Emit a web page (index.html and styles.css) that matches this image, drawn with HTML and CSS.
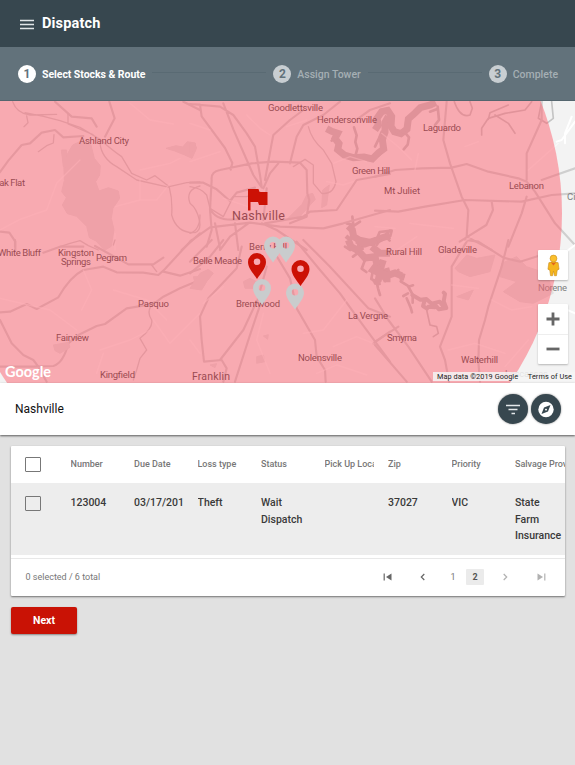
FILE: index.html
```html
<!DOCTYPE html>
<html lang="en">
<head>
<meta charset="utf-8">
<title>Dispatch</title>
<link rel="stylesheet" href="styles.css">
</head>
<body>
<header class="topbar">
  <svg class="menu" viewBox="0 0 14 11"><path d="M0 1.500h14M0 5.500h14M0 9.500h14"/></svg>
  <h1>Dispatch</h1>
</header>
<nav class="stepper">
  <div class="step active"><span class="num">1</span><span>Select Stocks &amp; Route</span></div>
  <i class="line"></i>
  <div class="step"><span class="num">2</span><span>Assign Tower</span></div>
  <i class="line"></i>
  <div class="step"><span class="num">3</span><span>Complete</span></div>
</nav>
<section class="map">
  <svg class="map-art" viewBox="0 101 575 282">
    <defs>
      <path id="pin" fill-rule="evenodd" d="M0 0C-4-6-9-11-9-17A9 9 0 0 1 9-17C9-11 4-6 0 0ZM0-20.5A3.3 3.3 0 1 0 0-13.9A3.3 3.3 0 1 0 0-20.5Z"/>
    </defs>
    <rect y="101" width="575" height="282" fill="#f3f3f3"/>
    <g transform="translate(0 100) scale(.33333)">
      <path class="land" d="M218 135l25-12 30 12 10 40 18 22-2 28-12 20 10 28 28-10 30 10 4 22-20 30-5 30 8 34-8 50-20 12-26-28-20-10-8-34-30-30-28-8-15-26 12-22-14-18 8-34-2-60zM184 150l16 0-2 50-8 0zM498 145l30-8 20 4 14-16 24 4 2 20-12 26-22-10-30-12z"/>
      <path class="road" d="M0 216L25 182 65 135 90 130 125 98 165 90 190 112 250 108M328 5L344 55 315 110M165 5l50 45 60 5 15 25M0 395l28 3 18 27 0 25M545 450L600 400M550 5l50 25"/>
      <path class="river" d="M38 5Q50 40 90 45L170 43M75 38Q130 48 180 62L240 82 300 118Q335 150 365 170L395 220 440 240 465 227 508 260 560 248 600 246M300 130Q305 175 350 200L410 240 508 262Q518 300 515 345 530 400 585 398 605 390 598 360 590 325 570 310 555 270 600 258M80 48l4 20-12 12M204 42l0 30 75 32M115 155l25-18 20-8 2-25M180 440l30-10 30-8 25 15 30 13"/>
      <path class="minor" d="M0 390L60 358 140 330 170 250 240 180M345 320L420 300 420 240M345 400l0 50M420 300l50 0 40-50M390 10l60 50 70 12M420 210l90-20 30-15"/>
    </g>
    <g transform="translate(190 100) scale(.33333)">
      <path class="land" d="M0 130l14 0 6 15-20 15zM350 285l18-5 8 18-45 50-40 10 45-45zM398 270l20-15-8 60-15 8z"/>
      <path class="lake wide" d="M410 86l15 8 18 6-8 15 12 16-4 18 20 16 27 8 32-2 25 6 20-20 14-10-4-28 8-22 0-30 10-18"/>
      <path class="lake" d="M492 82l8 24-4 20 6 20-6 22M545 178l25-15M425 122l15-8"/>
      <path class="lake wide" d="M475 378l12 12 4 20 20 12 0 28M505 420l40 8 30-14 25-8M480 410l-8 10"/>
      <path class="lake" d="M487 350l3 25-20-5M510 365l-18 12M590 400l10-8"/>
      <path class="road" d="M0 12l30 2 5 35 70 95 22 45-5 20M100 10L130 88 190 225 215 262M0 12L90 20 130 45 170 100 195 140 210 225 215 260M0 248l40 0 40 20 40 35 20-25 55-15M60 330L65 240Q62 215 90 210L185 190 250 185 330 188 350 210 352 280 358 300 350 350 300 370M225 240L245 130 250 105 300 60 340 30M300 190L320 110 340 75 400 45 450 5M220 265L240 220 265 190M600 10L540 30 505 55M225 370L340 350 360 335 440 330 500 240 600 222M0 425l60-43 120-14 90 12 130 5 60-15L600 330M60 330l5 60-15 50M75 370l15 75M135 370L145 450M175 370L120 410 90 450M215 370l45 20 90 60M230 265L220 360M60 325Q80 370 160 355"/>
      <path class="river" d="M0 260Q35 265 50 285L60 325 100 350 130 290 170 290 210 275M355 80Q365 120 400 150L425 190 438 245Q430 285 395 280L370 250 370 195 345 178 310 200M30 345Q30 390 0 400"/>
      <path class="minor" d="M170 45l40 40 30 20M430 190l50-20 50 15M0 70l60 20M0 185l90-30M100 295l90 30M290 80l60-20M410 245l50 10 30-10"/>
    </g>
    <g transform="translate(375 100) scale(.33333)">
      <path class="lake wide" d="M0 90l10-15-4-20 14-20 18-4 12 18-2 30 10 16 20 6 18-14 4-30 20-18 16-16 30-8 16-8"/>
      <path class="lake" d="M90 98l12 14-4 22-12 14M0 140l12-25 8-20M165 35l22-8M188 20l4 40-12 15M60 92l20 10"/>
      <path class="lake" d="M5 435l15-22 26-5 4-16-36 4-6 14M32 410l12 12"/>
      <path class="wriver" d="M238 5Q255 55 285 45L292 25 285 5M400 15l-55 23-5 20M470 5l-20 25-60 10-50 15-20 30 0 20M360 45l40 25 20 30M530 5l5 50-20 15-25-15 10-50"/>
      <path class="road" d="M215 5L205 120 225 190 260 290 280 330 275 410 350 450M0 230L60 210 140 205 230 203 275 192 340 215 430 235 455 245M0 332L70 335 150 320 270 300 440 305 530 285 600 280M500 5L500 60 455 160 455 240M500 240L600 205M455 290L440 340 400 440M480 275L540 370 600 435M350 305l4 25-20 45-80 50M455 245l25 30"/>
      <path class="minor" d="M20 100l50 40 40 40M105 370l40 5 90 10M0 380l60 5M130 160l-10 50M460 210l90-80M270 140l40-15M65 450l60-40"/>
      <path class="outer" d="M600 65L560 120 545 125M570 130l0-30 20-50"/>
    </g>
    <g transform="translate(0 240) scale(.33333)">
      <path class="road" d="M45 20l0-20M0 217l30-2 50-23 30 15 65-35Q210 110 250 90L310 80 350 97 430 98 475 105 490 92 575 0M0 240L35 310 70 345 100 360 115 380 140 425M0 380L100 380 160 378Q190 370 205 310L235 285 290 258 315 252 380 205 430 197 470 185 490 170 540 145 600 120M490 95l50 12 60-20M130 38l50-18 70 0M285 18l100 55 75 0 30-20M385 73l75 0"/>
      <path class="river" d="M465 185Q435 210 455 240 460 265 420 295L440 330 420 355 410 390 400 420M455 75l15 20M340 15l5-15"/>
      <path class="land" d="M160 315l45-8 5 15-30 18-15-8zM580 110l20 0 0 40-12-10z"/>
      <path class="minor" d="M0 175l150 35 80 60M250 90l25 60-30 60M340 150l100 30 60 60M300 330l90-30 60-30M600 220l-90 90-50-70M290 400l20-60"/>
    </g>
    <g transform="translate(190 240) scale(.33333)">
      <path class="land" d="M30 100l25-12 15 12-20 25-15 25-35-5zM160 125l20-10 20 10-5 20-30 0zM200 350l20-5 5 20-25 5zM220 288l15-4-2 14zM60 375l20-4-5 12z"/>
      <path class="lake wide" d="M475 0l8 20 22 12 20 22 30-4 6 24-12 16 20 10 31-8M500 0l25 12 35-12M545 20l25 20 30 0M580 60l-10 30"/>
      <path class="lake" d="M465 20l15 10M505 38l-16 12M525 60l-10 26 14 10M548 95l-4 22 16 8 4 20 6 20M570 105l16 18M555 130l14 2"/>
      <path class="road" d="M65 0L0 65M100 0L60 50 0 100M155 20L140 85 55 175 30 230 35 300 42 365 95 360 110 385 100 425M90 360L160 270 195 195M212 190L195 240 180 285 135 425M255 40L300 115 320 205 375 300 380 350 405 390 407 425M320 5L390 90 450 160 500 230 600 365M340 0L420 80 535 205 600 230M550 310l50-35M230 80l-30 110"/>
      <path class="minor" d="M100 140l-60 50M470 180l-70 90-60 10M430 320l70-30 50 20M380 400l60-25 90 30M220 220l-20 80 40 100M0 300l30 40"/>
    </g>
    <g transform="translate(375 240) scale(.33333)">
      <path class="land" d="M240 85l35-40 30 10 55-10-15 50-60 15-35-15zM245 170l50-20-15 30zM380 70l45-20 30 30 60 20 20 60-60 30-40-5-50-30 40-30-50-15z"/>
      <path class="lake wide" d="M0 85l15 10-5 25-10 12M12 95l24 12 24-8 20 8M36 107l0 20M75 108l14 4"/>
      <path class="lake" d="M10 62l14 20M60 100l10-10M85 110l-8 14 22 14 14 26 0 24M100 140l14-4M95 175l12 28 4 14M99 160l-14 8"/>
      <path class="lake mid" d="M112 165l24 14 18-2 16 14 24-6 12 16M150 178l-6 20 12 8M176 190l16 18 22-4-8-20 4-22-4-4M160 200l20 2"/>
      <path class="wriver" d="M155 210l10 45 20 5 5 20-15 10"/>
      <path class="road" d="M400 0L380 80 340 200 330 240 312 300 310 365 315 425M275 5L230 80 230 230 195 320 210 360 222 425M270 0l40 5 75 48 50 12 55-17M0 175l40 65 60 80 70 105M0 315L95 425M0 305l70-45"/>
      <path class="minor" d="M200 50l90-60M230 135l80 10M350 180l60 30 60-10M220 330l80-20 90 30M390 380l70-80"/>
      <path class="outer" d="M555 200l45 20M580 30l20-15"/>
    </g>
    <g class="labels">
      <text x="79" y="143.500" textLength="50">Ashland City</text>
      <text x="-7" y="186" textLength="32">Oak Flat</text>
      <text x="268" y="110.500" textLength="55">Goodlettsville</text>
      <text x="317" y="123" textLength="60">Hendersonville</text>
      <text x="423" y="131" textLength="38">Laguardo</text>
      <text x="352" y="173.500" textLength="38">Green Hill</text>
      <text x="384" y="194" textLength="36">Mt Juliet</text>
      <text x="509" y="188.500" textLength="35">Lebanon</text>
      <text x="-2" y="256" textLength="43">White Bluff</text>
      <text x="58" y="256" textLength="36">Kingston</text>
      <text x="61" y="265" textLength="30">Springs</text>
      <text x="96" y="261" textLength="31">Pegram</text>
      <text x="138" y="307" textLength="31">Pasquo</text>
      <text x="56" y="341" textLength="33">Fairview</text>
      <text x="100" y="378" textLength="35">Kingfield</text>
      <text x="193" y="264" textLength="49">Belle Meade</text>
      <text x="249" y="249.500" textLength="38">Berry Hill</text>
      <text x="236" y="306.500" textLength="44">Brentwood</text>
      <text class="big" x="192" y="379.500" textLength="38">Franklin</text>
      <text x="298" y="361" textLength="44">Nolensville</text>
      <text x="348" y="318.500" textLength="40">La Vergne</text>
      <text x="387" y="341" textLength="30">Smyrna</text>
      <text x="386" y="254.500" textLength="36">Rural Hill</text>
      <text x="438" y="253" textLength="39">Gladeville</text>
      <text x="461" y="363" textLength="37">Walterhill</text>
      <text class="dim" x="538" y="291" textLength="29">Norene</text>
      <text class="dim" x="567" y="200">City</text>
      <text class="dim" x="505" y="376.500" textLength="43">Lascassas</text>
      <text class="city" x="232" y="220" textLength="53">Nashville</text>
    </g>
    <circle cx="258.500" cy="213" r="303.500" fill="#fe626f" fill-opacity=".5"/>
    <path fill="#cc1105" d="M248 189h10.500l1 3H267.500v13H259l-1-3h-7.500v8.500H248z"/>
    <g fill="#c9cccd">
      <use href="#pin" x="273" y="262.500"/><use href="#pin" x="286" y="262.500"/>
      <use href="#pin" x="262" y="305"/><use href="#pin" x="295" y="309.500"/>
    </g>
    <g fill="#cc1105"><use href="#pin" x="257" y="279"/><use href="#pin" x="300.500" y="286"/></g>
    <text class="google" x="5" y="376.500" textLength="46" lengthAdjust="spacingAndGlyphs">Google</text>
  </svg>
  <div class="controls">
    <div class="pegman">
      <svg viewBox="0 0 14 24"><path fill="#f5b51d" stroke="#c58a1c" stroke-width=".6" d="M2 9Q7 7 12 9L13 16l-2 1-.8 6H8L7 18l-1 5H3.800L3 17 1 16z"/><circle cx="7" cy="4.500" r="3.700" fill="#fbc02d" stroke="#c58a1c" stroke-width=".6"/><path fill="#e2641c" d="M4 8.600Q7 10 10 8.600L7 12z"/></svg>
    </div>
    <div class="zoom">
      <svg viewBox="0 0 30 30"><path d="M8.500 15h13M15 8.500v13"/></svg>
      <svg viewBox="0 0 30 30"><path d="M8.500 15h13"/></svg>
    </div>
  </div>
  <div class="credits"><span>Map data ©2019 Google</span><span>Terms of Use</span></div>
</section>
<section class="location">
  <span class="place">Nashville</span>
  <span class="round"><svg viewBox="0 0 30 30"><path class="bars" d="M8 11.500h14M10.500 15.500h9M13.500 19.500h3.500"/></svg></span>
  <span class="round"><svg viewBox="0 0 30 30"><circle cx="15" cy="15.500" r="7.700" fill="#fff"/><path fill="#37474f" fill-rule="evenodd" d="M19.500 11L17 17.500 10.500 20 13 13.500zM15 14.700a.9.900 0 1 0 .01 0z"/></svg></span>
</section>
<main>
  <div class="card">
    <div class="row head">
      <span class="check"></span><span>Number</span><span>Due Date</span><span>Loss type</span><span>Status</span><span>Pick Up Location</span><span>Zip</span><span>Priority</span><span>Salvage Provider</span>
    </div>
    <div class="row body">
      <span class="check"></span><span>123004</span><span>03/17/2019</span><span>Theft</span><span class="wrap">Wait Dispatch</span><span></span><span>37027</span><span>VIC</span><span class="wrap">State Farm Insurance</span>
    </div>
    <div class="foot">
      <span class="total">0 selected / 6 total</span>
      <div class="pager">
        <svg viewBox="0 0 10 10"><path d="M1.200 1.500v7"/><path class="solid" d="M8.500 1.500v7L3 5z"/></svg>
        <svg viewBox="0 0 10 10"><path d="M6.300 2L3.300 5l3 3"/></svg>
        <span>1</span><span class="current">2</span>
        <svg class="off" viewBox="0 0 10 10"><path d="M3.700 2l3 3-3 3"/></svg>
        <svg class="off" viewBox="0 0 10 10"><path d="M8.800 1.500v7"/><path class="solid" d="M1.500 1.500v7L7 5z"/></svg>
      </div>
    </div>
  </div>
  <button class="next">Next</button>
</main>
</body>
</html>
```
FILE: styles.css
```css
* { box-sizing: border-box; }
body { margin: 0; height: 765px; overflow: hidden; background: #e1e1e1; font-family: Roboto, "Liberation Sans", sans-serif; display: flex; flex-direction: column; }
.topbar { height: 47px; flex: none; background: #37474f; display: flex; align-items: center; padding: 0 20px; gap: 8px; color: #fff; }
.menu { width: 14px; height: 11px; margin-top: 2px; stroke: #e1e6e8; stroke-width: 1.7; }
h1 { margin: 0; font-size: 14.5px; line-height: 20px; font-weight: 700; letter-spacing: .15px; }
.stepper { height: 54px; flex: none; background: #62727b; display: flex; align-items: center; padding: 0 17px 0 18px; border-bottom: 1px solid #55666f; }
.step { display: flex; align-items: center; gap: 6px; color: #a5afb4; font-size: 10.5px; font-weight: 500; white-space: nowrap; position: relative; top: .5px; }
.step.active { color: #fff; font-weight: 700; letter-spacing: -.05px; }
.num { width: 18px; height: 18px; border-radius: 50%; background: #c8ced2; color: #62727b; display: flex; align-items: center; justify-content: center; font-size: 12px; font-weight: 700; letter-spacing: 0; }
.active .num { background: #fff; }
.line { flex: 1; height: 1px; background: #596a73; margin: 0 7px 2px; }
.map { position: relative; height: 282px; flex: none; overflow: hidden; }
.map-art { display: block; width: 575px; height: 282px; }
.road, .river, .minor, .outer, .wriver, .lake { fill: none; stroke-linejoin: round; stroke-linecap: round; }
.road { stroke: #cfcfcf; stroke-width: 6.5; }
.river { stroke: #cdcdcd; stroke-width: 4; }
.wriver { stroke: #c5c5c5; stroke-width: 5; }
.lake { stroke: #c2c2c2; stroke-width: 8; }
.lake.mid { stroke-width: 12; }
.lake.wide { stroke-width: 21; stroke-linejoin: miter; stroke-linecap: butt; }
.minor { stroke: #fff; stroke-opacity: .5; stroke-width: 4; }
.outer { stroke: #fff; stroke-width: 6; }
.land { fill: #e0e0e0; stroke: #e0e0e0; stroke-width: 3; stroke-linejoin: round; }
.labels { font-size: 9.5px; fill: #333; }
.labels .dim { fill: #808080; }
.labels .big { font-size: 10.5px; }
.labels .city { font-size: 12.5px; }
.google { font: 700 14.5px Lato, sans-serif; fill: #fff; }
.controls { position: absolute; right: 7px; top: 149px; width: 30px; display: flex; flex-direction: column; gap: 24px; }
.pegman, .zoom { background: #fff; border-radius: 1px; box-shadow: 0 1px 2px rgba(0,0,0,.25); }
.pegman { height: 30px; display: flex; justify-content: center; align-items: center; }
.pegman svg { width: 13px; height: 23px; }
.zoom { height: 60px; }
.zoom svg { display: block; width: 30px; height: 30px; stroke: #666; stroke-width: 2.8; }
.zoom svg + svg { box-shadow: inset 0 1px #eee; }
.credits { position: absolute; right: 0; bottom: 2px; width: 142px; height: 9px; padding: 0 3px 0 4px; display: flex; align-items: center; justify-content: space-between; background: rgba(245,245,245,.85); font-size: 7.3px; color: #222; white-space: nowrap; font-weight: 400; letter-spacing: .08px; }
.location { height: 52px; flex: none; background: #fff; display: flex; align-items: center; gap: 3px; padding: 0 14px 0 15px; box-shadow: 0 1px 2px rgba(0,0,0,.6); position: relative; }
.place { flex: 1; font-size: 12px; color: #111; }
.round { width: 30px; height: 30px; border-radius: 50%; background: #37474f; box-shadow: 0 0 2px rgba(0,0,0,.5); margin-bottom: 1px; }
.round svg { display: block; width: 30px; height: 30px; }
.bars { stroke: #e4e8ea; stroke-width: 1.6; }
main { padding: 11px 10px 0 11px; }
.card { height: 150px; background: #fff; border-radius: 1px; box-shadow: 0 1px 2px rgba(0,0,0,.5); overflow: hidden; }
.row { display: grid; grid-template-columns: 45px repeat(8, 63.5px); padding-left: 14.5px; }
.row > span { overflow: hidden; white-space: nowrap; margin-right: 14px; }
.row .wrap { white-space: normal; margin-right: 0; padding-right: 16px; overflow: visible; }
.row > .check { width: 16px; height: 15px; border: 1.5px solid #777; border-radius: 1px; margin: 0 0 0 -.5px; }
.head { height: 37px; align-items: center; font-size: 9px; font-weight: 500; color: #777; }
.head > span { margin-top: -2px; }
.head > .check { margin-top: -1px; }
.head > span:last-child { margin-right: 0; width: 51px; }
.body { height: 72px; background: #ededed; padding-top: 12px; font-size: 10.5px; line-height: 16.5px; font-weight: 500; color: #3a3a3a; }
.body > .check { margin-top: 1px; }
.foot { margin-top: 3px; height: 38px; border-top: 1px solid #e8e8e8; display: flex; align-items: center; justify-content: space-between; padding: 0 19.5px 2px 14.5px; font-size: 9px; color: #777; }
.pager { display: grid; grid-template-columns: 35.3px 30px 18px 34px 35.5px 10px; align-items: center; }
.pager svg { width: 10px; height: 10px; stroke: #666; stroke-width: 1.2; fill: none; }
.pager > span { width: 10px; text-align: center; }
.pager .solid { fill: #666; stroke: none; }
.pager .off { opacity: .5; }
.pager > .current { width: 18px; background: #ebebeb; height: 16px; line-height: 16px; font-weight: 700; color: #555; border-radius: 1px; }
.next { display: block; margin-top: 11px; width: 66px; height: 27px; border: 0; border-radius: 2px; background: #c91205; color: #fff; font: 700 10.5px Roboto, sans-serif; box-shadow: 0 1px 2px rgba(0,0,0,.4); }
```
